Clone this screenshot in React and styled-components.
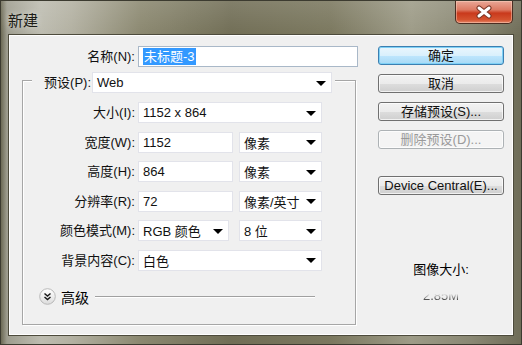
import styled, { createGlobalStyle } from "styled-components";

const GlobalStyle = createGlobalStyle`
  html, body {
    margin: 0;
    padding: 0;
    background: #ffffff;
  }
  body {
    font-family: "Liberation Sans", "Noto Sans CJK SC", sans-serif;
    font-size: 13px;
    color: #000;
  }
`;

const Window = styled.div`
  width: 522px;
  height: 345px;
  display: flex;
  flex-direction: column;
  box-sizing: border-box;
  background:
    linear-gradient(180deg, rgba(255, 255, 255, 0.12) 0px, rgba(255, 255, 255, 0) 34px),
    linear-gradient(90deg, #6c6a55 0px, #9e9d8f 6px, #bdbcb0 40px, #b3b1a2 70px, #8b8870 140px, #716e56 230px, #7b785f 330px, #9d9b87 410px, #8a8874 470px, #6e6c57 522px);
  border: 1px solid #3c3b30;
`;

const TitleBar = styled.div`
  height: 33px;
  display: flex;
  align-items: flex-start;
  justify-content: space-between;
`;

const Title = styled.div`
  padding: 10px 0 0 7px;
  font-family: "Noto Sans CJK SC", sans-serif;
  font-size: 15px;
  line-height: 18px;
  color: #1c1c16;
  text-shadow: 0 0 6px rgba(255, 255, 255, 0.7);
`;

const CloseButton = styled.div`
  width: 58px;
  height: 23px;
  margin: 0 8px 0 0;
  box-sizing: border-box;
  border: 1px solid #4b2d22;
  border-top: none;
  border-radius: 0 0 5px 5px;
  background: linear-gradient(180deg, #e9a797 0%, #dd7a63 40%, #c9391c 55%, #d4532f 85%, #e5866a 100%);
  box-shadow: inset 0 0 0 1px rgba(255, 220, 200, 0.45);
  display: flex;
  align-items: center;
  justify-content: center;
`;

const Body = styled.div`
  flex: 1;
  margin: 0 7px 8px 7px;
  background: #f0f0f0;
  border: 1px solid #4d4b3c;
  box-shadow: inset 0 0 0 1px #ffffff;
  display: flex;
  align-items: flex-start;
`;

const LeftColumn = styled.div`
  display: flex;
  flex-direction: column;
  padding-top: 11px;
`;

const NameRow = styled.div`
  display: flex;
  align-items: center;
  gap: 3px;
`;

const Label = styled.div`
  width: ${(p) => p.width || 112}px;
  text-align: right;
  white-space: nowrap;
  line-height: 21px;
  color: #111;
`;

const TextInput = styled.div`
  width: ${(p) => p.width}px;
  height: 21px;
  box-sizing: border-box;
  background: #ffffff;
  border: 1px solid ${(p) => (p.focused ? "#a9b8c8" : "#e2e3ea")};
  padding-left: 4px;
  display: flex;
  align-items: center;
  line-height: 17px;
  white-space: nowrap;
  color: #111;
`;

const Selected = styled.span`
  background: #3399ff;
  color: #ffffff;
  padding: 0 1px;
`;

const SelectBox = styled.div`
  width: ${(p) => p.width}px;
  height: 21px;
  box-sizing: border-box;
  background: #ffffff;
  border: 1px solid #e2e3ea;
  padding: 0 5px 0 4px;
  display: flex;
  align-items: center;
  justify-content: space-between;
  white-space: nowrap;
  color: #111;
`;

const Arrow = styled.span`
  width: 0;
  height: 0;
  border-left: 5px solid transparent;
  border-right: 5px solid transparent;
  border-top: 5px solid #000;
  margin-top: 1px;
`;

const GroupBox = styled.div`
  width: 334px;
  margin: 13px 0 0 13px;
  box-sizing: border-box;
  border: 1px solid #a6a6a6;
  box-shadow: inset 1px 1px 0 #ffffff, 1px 1px 0 #ffffff;
  padding-bottom: 17px;
  display: flex;
  flex-direction: column;
`;

const Legend = styled.div`
  display: flex;
  align-items: center;
  align-self: flex-start;
  margin: -9px 0 0 9px;
  background: #f0f0f0;
  padding: 0 3px 0 10px;
  gap: 1px;
`;

const Rows = styled.div`
  display: flex;
  flex-direction: column;
  gap: 8.5px;
  margin-top: 9px;
`;

const Row = styled.div`
  display: flex;
  align-items: center;
  gap: 3px;
`;

const Controls = styled.div`
  display: flex;
  align-items: center;
  gap: ${(p) => p.gap || 6}px;
`;

const AdvancedRow = styled.div`
  display: flex;
  align-items: center;
  margin-top: 16px;
  padding-left: 16px;
`;

const AdvancedText = styled.span`
  margin-left: 5px;
  font-size: 14px;
`;

const Rule = styled.div`
  width: 220px;
  height: 1px;
  margin-left: 6px;
  background: #a0a0a0;
  box-shadow: 0 1px 0 #ffffff;
`;

const RightColumn = styled.div`
  display: flex;
  flex-direction: column;
  align-items: center;
  margin-left: 20px;
  padding-top: 11px;
  width: 126px;
`;

const ButtonStack = styled.div`
  display: flex;
  flex-direction: column;
  gap: 9px;
  margin-top: ${(p) => p.offset || 0}px;
`;

const Button = styled.div`
  width: 126px;
  height: 19px;
  box-sizing: border-box;
  border: 1px solid ${(p) => (p.primary ? "#3c7fb1" : p.disabled ? "#adb2b5" : "#707070")};
  border-radius: 3px;
  background: ${(p) =>
    p.primary
      ? "linear-gradient(180deg, #eaf6fd 0%, #d9f0fc 50%, #bee6fd 51%, #a7d9f5 100%)"
      : p.disabled
      ? "#f4f4f4"
      : "linear-gradient(180deg, #f2f2f2 0%, #ebebeb 50%, #dddddd 51%, #cfcfcf 100%)"};
  box-shadow: inset 0 0 0 1px ${(p) => (p.primary ? "#7fd1f6" : "rgba(255, 255, 255, 0.7)")};
  color: ${(p) => (p.disabled ? "#9a9a9a" : "#111")};
  display: flex;
  align-items: center;
  justify-content: center;
  line-height: 15px;
  white-space: nowrap;
`;

const SizeLabel = styled.div`
  margin-top: 66px;
  font-size: 13px;
  line-height: 17px;
`;

const SizeValue = styled.div`
  margin-top: 9px;
  line-height: 17px;
  color: #4a4a4a;
  -webkit-mask-image: linear-gradient(180deg, transparent 40%, #000 75%);
  mask-image: linear-gradient(180deg, transparent 40%, #000 75%);
`;

const CloseIcon = () => (
  <svg width="18" height="14" viewBox="0 0 18 14">
    <path
      d="M4 3 L14 11 M14 3 L4 11"
      fill="none"
      stroke="#7a3424"
      strokeWidth="5"
      strokeLinecap="round"
    />
    <path
      d="M4 3 L14 11 M14 3 L4 11"
      fill="none"
      stroke="#ffffff"
      strokeWidth="3"
      strokeLinecap="round"
    />
  </svg>
);

const ExpandIcon = () => (
  <svg width="17" height="17" viewBox="0 0 17 17">
    <defs>
      <linearGradient id="expandFill" x1="0" y1="0" x2="0" y2="1">
        <stop offset="0" stopColor="#ffffff" />
        <stop offset="1" stopColor="#dcdcdc" />
      </linearGradient>
    </defs>
    <circle cx="8.5" cy="8.5" r="7.8" fill="url(#expandFill)" stroke="#b8b8b8" />
    <path
      d="M5.5 5.5 L8.5 8 L11.5 5.5 M5.5 9 L8.5 11.5 L11.5 9"
      fill="none"
      stroke="#1a1a1a"
      strokeWidth="1.5"
    />
  </svg>
);

const Select = ({ width, children }) => (
  <SelectBox width={width}>
    <span>{children}</span>
    <Arrow />
  </SelectBox>
);

const App = () => {
  return (
    <>
      <GlobalStyle />
      <Window>
        <TitleBar>
          <Title>新建</Title>
          <CloseButton>
            <CloseIcon />
          </CloseButton>
        </TitleBar>
        <Body>
          <LeftColumn>
            <NameRow>
              <Label width={126}>名称(N):</Label>
              <TextInput width={220} focused>
                <Selected>未标题-3</Selected>
              </TextInput>
            </NameRow>

            <GroupBox>
              <Legend>
                <Label width={49}>预设(P):</Label>
                <Select width={240}>Web</Select>
              </Legend>

              <Rows>
                <Row>
                  <Label>大小(I):</Label>
                  <Select width={184}>1152 x 864</Select>
                </Row>
                <Row>
                  <Label>宽度(W):</Label>
                  <Controls>
                    <TextInput width={95}>1152</TextInput>
                    <Select width={83}>像素</Select>
                  </Controls>
                </Row>
                <Row>
                  <Label>高度(H):</Label>
                  <Controls>
                    <TextInput width={95}>864</TextInput>
                    <Select width={83}>像素</Select>
                  </Controls>
                </Row>
                <Row>
                  <Label>分辨率(R):</Label>
                  <Controls>
                    <TextInput width={95}>72</TextInput>
                    <Select width={83}>像素/英寸</Select>
                  </Controls>
                </Row>
                <Row>
                  <Label>颜色模式(M):</Label>
                  <Controls gap={10}>
                    <Select width={91}>RGB 颜色</Select>
                    <Select width={83}>8 位</Select>
                  </Controls>
                </Row>
                <Row>
                  <Label>背景内容(C):</Label>
                  <Select width={184}>白色</Select>
                </Row>
              </Rows>

              <AdvancedRow>
                <ExpandIcon />
                <AdvancedText>高级</AdvancedText>
                <Rule />
              </AdvancedRow>
            </GroupBox>
          </LeftColumn>

          <RightColumn>
            <ButtonStack>
              <Button primary>确定</Button>
              <Button>取消</Button>
              <Button>存储预设(S)...</Button>
              <Button disabled>删除预设(D)...</Button>
            </ButtonStack>
            <ButtonStack offset={27}>
              <Button>Device Central(E)...</Button>
            </ButtonStack>
            <SizeLabel>图像大小:</SizeLabel>
            <SizeValue>2.85M</SizeValue>
          </RightColumn>
        </Body>
      </Window>
    </>
  );
};

export default App;
